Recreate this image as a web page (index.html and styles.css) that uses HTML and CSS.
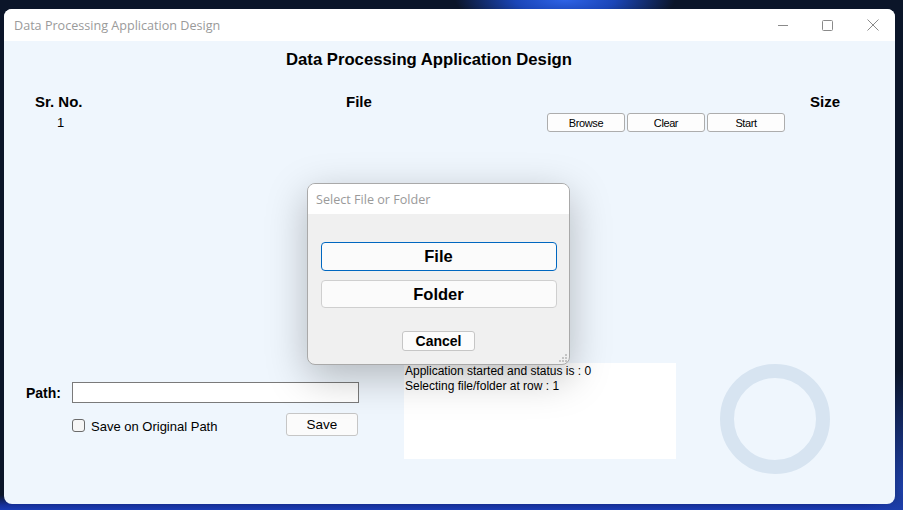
FILE: index.html
```html
<!DOCTYPE html>
<html>
<head>
<meta charset="utf-8">
<title>Data Processing Application Design</title>
<link rel="stylesheet" href="styles.css">
</head>
<body>
<div class="window">
  <div class="titlebar">
    <span class="title">Data Processing Application Design</span>
    <div class="controls">
      <span class="ctl"><svg width="10" height="10" viewBox="0 0 10 10"><path d="M0 5.5H10" stroke="#8a8a8a" stroke-width="1"/></svg></span>
      <span class="ctl"><svg width="11" height="11" viewBox="0 0 11 11"><rect x="0.5" y="0.5" width="10" height="10" rx="1" fill="none" stroke="#8a8a8a" stroke-width="1"/></svg></span>
      <span class="ctl"><svg width="12" height="12" viewBox="0 0 12 12"><path d="M0.5 0.5L11.5 11.5M11.5 0.5L0.5 11.5" stroke="#8a8a8a" stroke-width="1"/></svg></span>
    </div>
  </div>
  <div class="content">
    <h1 class="heading">Data Processing Application Design</h1>
    <div class="grid-head">
      <span class="col-sr">Sr. No.</span>
      <span class="col-file">File</span>
      <span class="col-size">Size</span>
    </div>
    <div class="row">
      <span class="cell-sr">1</span>
      <div class="btns">
        <button class="btn">Browse</button>
        <button class="btn">Clear</button>
        <button class="btn">Start</button>
      </div>
    </div>
    <div class="bottom">
      <div class="path-col">
        <div class="path-row">
          <label class="path-label">Path:</label>
          <div class="path-input"></div>
        </div>
        <div class="save-row">
          <span class="checkbox"></span>
          <span class="check-text">Save on Original Path</span>
          <button class="save-btn">Save</button>
        </div>
      </div>
      <div class="log">
        <div>Application started and status is : 0</div>
        <div>Selecting file/folder at row : 1</div>
      </div>
      <div class="ring"></div>
    </div>
    <div class="dialog">
      <div class="dlg-title">Select File or Folder</div>
      <div class="dlg-body">
        <button class="dlg-btn focused">File</button>
        <button class="dlg-btn">Folder</button>
        <button class="cancel-btn">Cancel</button>
      </div>
      <svg class="grip" width="10" height="10" viewBox="0 0 10 10">
        <rect x="7" y="1" width="2" height="2" fill="#c4c4c4"/>
        <rect x="4" y="4" width="2" height="2" fill="#c4c4c4"/>
        <rect x="7" y="4" width="2" height="2" fill="#c4c4c4"/>
        <rect x="1" y="7" width="2" height="2" fill="#c4c4c4"/>
        <rect x="4" y="7" width="2" height="2" fill="#c4c4c4"/>
        <rect x="7" y="7" width="2" height="2" fill="#c4c4c4"/>
      </svg>
    </div>
  </div>
</div>
</body>
</html>
```

FILE: styles.css
```css
html, body {
  margin: 0;
  padding: 0;
}
body {
  width: 903px;
  height: 510px;
  overflow: hidden;
  font-family: "Liberation Sans", Arial, sans-serif;
  background:
    radial-gradient(ellipse 110px 30px at 565px 0px, #2e63e6 0%, #1b46b8 45%, rgba(12,24,60,0) 100%),
    radial-gradient(ellipse 40px 120px at 903px 490px, #1d3fa8 0%, rgba(12,24,60,0) 100%),
    linear-gradient(to bottom, rgba(0,0,0,0) 495px, #16309a 505px, #1b3cb4 510px),
    #0b1529;
}
.window {
  margin: 9px 0 0 4px;
  width: 891px;
  height: 495px;
  border-radius: 8px;
  overflow: hidden;
  background: #eff6fd;
  display: flex;
  flex-direction: column;
}
.titlebar {
  height: 32px;
  flex: none;
  background: #ffffff;
  display: flex;
  align-items: center;
}
.title {
  padding-left: 10px;
  font-family: "Open Sans", "Noto Sans", sans-serif;
  font-size: 12.6px;
  color: #9a9a9a;
}
.controls {
  margin-left: auto;
  display: flex;
  height: 100%;
}
.ctl {
  width: 45px;
  height: 100%;
  display: flex;
  align-items: center;
  justify-content: center;
}
.content {
  position: relative;
  flex: 1;
  padding-top: 9px;
}
.heading {
  margin: 0 0 0 282px;
  font-size: 16.7px;
  line-height: 20px;
  font-weight: bold;
  color: #000;
}
.grid-head {
  margin-top: 23px;
  display: grid;
  grid-template-columns: 311px 464px auto;
  padding-left: 31px;
  font-size: 15px;
  line-height: 18px;
  font-weight: bold;
  color: #000;
}
.row {
  margin-top: 2px;
  display: flex;
  align-items: center;
  padding-left: 53px;
  padding-right: 110px;
  height: 19px;
}
.cell-sr {
  font-size: 13px;
  color: #000;
}
.btns {
  margin-left: auto;
  display: flex;
  gap: 2px;
}
.btn {
  width: 78px;
  height: 19px;
  padding: 0;
  border: 1px solid #adadad;
  border-radius: 3px;
  background: #fdfdfd;
  font-family: "Liberation Sans", Arial, sans-serif;
  font-size: 11px;
  letter-spacing: -0.4px;
  color: #000;
}
.bottom {
  margin-top: 231px;
  display: flex;
  align-items: flex-start;
  padding-left: 22px;
}
.path-col {
  width: 333px;
  padding-top: 19px;
}
.path-row {
  display: flex;
  align-items: center;
}
.path-label {
  width: 46px;
  font-size: 14px;
  font-weight: bold;
  color: #000;
}
.path-input {
  width: 287px;
  height: 21px;
  box-sizing: border-box;
  border: 1px solid #7a7a7a;
  background: #fff;
}
.save-row {
  margin-top: 10px;
  display: flex;
  align-items: center;
  padding-left: 46px;
}
.checkbox {
  width: 13px;
  height: 13px;
  margin-top: 2px;
  box-sizing: border-box;
  border: 1px solid #6b6b6b;
  border-radius: 3px;
  background: #f6f6f6;
}
.check-text {
  margin-left: 6px;
  margin-top: 3px;
  font-size: 13px;
  color: #000;
}
.save-btn {
  margin-left: auto;
  margin-right: 1px;
  width: 72px;
  height: 23px;
  padding: 0;
  border: 1px solid #c6c6c6;
  border-radius: 3px;
  background: #fbfbfb;
  font-family: "Liberation Sans", Arial, sans-serif;
  font-size: 13.5px;
  color: #000;
}
.log {
  margin-left: 45px;
  width: 272px;
  height: 96px;
  box-sizing: border-box;
  padding: 1px 0 0 1px;
  background: #fff;
  font-size: 12px;
  line-height: 15px;
  color: #000;
}
.ring {
  margin-left: 44px;
  margin-top: 1px;
  width: 110px;
  height: 110px;
  box-sizing: border-box;
  border: 14px solid #d7e4f1;
  border-radius: 50%;
}
.dialog {
  position: absolute;
  left: 303px;
  top: 142px;
  width: 263px;
  height: 182px;
  box-sizing: border-box;
  border: 1px solid #a9a9a9;
  border-radius: 8px;
  overflow: hidden;
  background: #f0f0f0;
  box-shadow: 0 12px 40px rgba(0, 0, 0, 0.26);
  display: flex;
  flex-direction: column;
}
.dlg-title {
  height: 30px;
  flex: none;
  background: #fff;
  display: flex;
  align-items: center;
  padding-left: 8px;
  font-family: "Open Sans", "Noto Sans", sans-serif;
  font-size: 12.6px;
  color: #9a9a9a;
}
.dlg-body {
  display: flex;
  flex-direction: column;
  align-items: center;
  padding-top: 28px;
}
.dlg-btn {
  width: 236px;
  height: 28px;
  padding: 0;
  border: 1px solid #cfcfcf;
  border-radius: 4px;
  background: #fbfbfb;
  font-family: "Liberation Sans", Arial, sans-serif;
  font-size: 16.5px;
  font-weight: bold;
  color: #000;
}
.dlg-btn.focused {
  height: 29px;
  border-color: #0067c0;
  margin-bottom: 9px;
}
.cancel-btn {
  margin-top: 23px;
  width: 73px;
  height: 20px;
  padding: 0;
  border: 1px solid #c6c6c6;
  border-radius: 3px;
  background: #fcfcfc;
  font-family: "Liberation Sans", Arial, sans-serif;
  font-size: 14px;
  font-weight: bold;
  color: #000;
}
.grip {
  position: absolute;
  right: 1px;
  bottom: 1px;
}
```
